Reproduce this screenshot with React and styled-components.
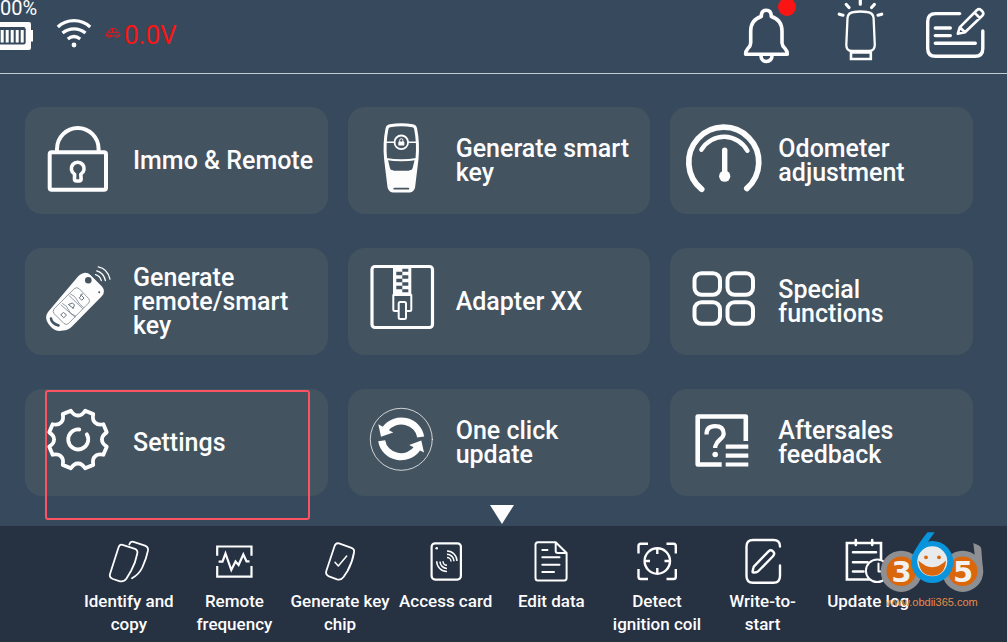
import React from "react";
import styled, { createGlobalStyle, css } from "styled-components";

const color = {
  page: "#374a5d",
  card: "#445360",
  dock: "#263142",
  rule: "#c3cad1",
  white: "#fdfdfe",
  alert: "#fb1414",
  mark: "#fb5264",
};

const GlobalStyle = createGlobalStyle`
  * { box-sizing: border-box; }
  html, body { margin: 0; padding: 0; }
  body {
    background: ${color.page};
    color: ${color.white};
    font-family: Roboto, "Liberation Sans", sans-serif;
  }
`;

const plainButton = css`
  appearance: none;
  border: 0;
  margin: 0;
  padding: 0;
  background: none;
  color: inherit;
  font-family: inherit;
  cursor: pointer;
`;

const Screen = styled.div`
  min-height: 100vh;
  display: flex;
  flex-direction: column;
  overflow: hidden;
`;

const Header = styled.header`
  display: flex;
  align-items: flex-start;
  min-height: 74px;
  padding-right: 20px;
  border-bottom: 1px solid ${color.rule};
`;

const Battery = styled.div`
  display: flex;
  flex-direction: column;
  width: 56px;
  font-size: 20px;
  line-height: 16px;
`;

const Voltage = styled.div`
  display: flex;
  gap: 3px;
  margin-left: 13px;
  color: ${color.alert};
  font-size: 26px;
  line-height: 70px;
`;

const Actions = styled.div`
  display: flex;
  gap: 40px;
  margin-left: auto;
`;

const ActionButton = styled.button`
  ${plainButton}
  position: relative;
  display: flex;
`;

const Badge = styled.span`
  position: absolute;
  top: -2px;
  right: 1px;
  width: 18px;
  height: 18px;
  border-radius: 50%;
  background: ${color.alert};
`;

const Icon = styled.svg`
  display: block;
  flex: none;
  fill: none;
  stroke: currentColor;
  stroke-width: ${(p) => p.$weight || 2}px;
  stroke-linecap: round;
  stroke-linejoin: round;
`;

const Main = styled.main`
  display: flex;
  flex-direction: column;
  padding-top: 33px;
`;

const Grid = styled.div`
  display: grid;
  grid-template-columns: repeat(3, 1fr);
  gap: 34px 20px;
  padding: 0 34px 0 25px;
`;

const Card = styled.button`
  ${plainButton}
  position: relative;
  display: flex;
  align-items: center;
  min-height: 107px;
  padding-right: 12px;
  border-radius: 17px;
  background: ${color.card};
  text-align: left;
  font-size: 25px;
  font-weight: 500;
  line-height: 24px;
`;

const CardLabel = styled.span`
  padding-top: 1px;
`;

const Highlight = styled.span`
  position: absolute;
  inset: 1px 18px -24px 20px;
  border: 2px solid ${color.mark};
  border-radius: 3px;
  pointer-events: none;
`;

const MoreButton = styled.button`
  ${plainButton}
  align-self: center;
  padding: 9px 4px 2px 0;
`;

const Dock = styled.nav`
  position: relative;
  flex: 1 0 auto;
  display: grid;
  grid-template-columns: repeat(8, 1fr);
  align-items: start;
  min-height: 116px;
  padding: 12px 86px 0 76px;
  background: ${color.dock};
`;

const DockButton = styled.button`
  ${plainButton}
  display: flex;
  flex-direction: column;
  align-items: center;
  gap: 4px;
  font-size: 17px;
  font-weight: 500;
  line-height: 23px;
  white-space: pre;
`;

const Watermark = styled.a`
  position: absolute;
  top: 5px;
  right: 17px;
  display: flex;
  flex-direction: column;
  color: #e88b46;
  font: 11px/14px "Liberation Sans", sans-serif;
  text-decoration: none;
`;

const Site = styled.span`
  padding: 2px 0 0 6px;
`;

/* Scalloped outline with eight teeth, centred on (cx, cy). */
function gearPath(cx, cy) {
  const at = (deg, r) => {
    const a = ((deg - 90) * Math.PI) / 180;
    return `${(cx + r * Math.cos(a)).toFixed(2)} ${(cy + r * Math.sin(a)).toFixed(2)}`;
  };
  let d = "";
  for (let k = 0; k < 8; k += 1) {
    const mid = k * 45;
    d += `${k === 0 ? "M" : "L"}${at(mid - 14, 29.6)} Q${at(mid - 9, 24)} ${at(mid, 24)} Q${at(mid + 9, 24)} ${at(mid + 14, 29.6)} `;
  }
  return `${d}Z`;
}

const solid = { fill: "currentColor", stroke: "none" };

const cards = [
  {
    label: "Immo & Remote",
    weight: 4,
    art: (
      <>
        <rect x="24.7" y="45.3" width="56.3" height="37.4" rx="2" />
        <path d="M32 45v-3a20.8 21 0 0 1 41.6 0v3" />
        <path strokeWidth="3.6" d="M49.6 67.2a6.4 6.4 0 1 1 6.2 0l.3 4.8q0 2-2 2h-2.6q-2 0-2-2z" />
      </>
    ),
  },
  {
    label: "Generate smart key",
    weight: 2,
    art: (
      <>
        <path strokeWidth="3" d="M42 18.7Q53.3 17 64.6 18.7q2.5.4 3 3Q70.5 36 69 52L65.6 80q-.6 3.500-4 4H45q-3.400-.5-4-4L37.600 52Q36 36 39 21.700q.5-2.600 3-3z" />
        <path {...solid} d="M38.500 58 41 62q1 1.800 3 1.800h18.600q2 0 3-1.800l2.500-4-2.500 22q-.6 3-4 4H45q-3.400-.5-4-4z" />
        <path d="M38 52Q53.300 54.500 68.600 52" />
        <path strokeWidth="2.500" d="M39 54l1.500 6.500q.8 4 4 4M67.600 54l-1.500 6.500q-.8 4-4 4" />
        <path strokeWidth="1.500" d="M38 35.300h8.500M60.200 35.300h8.500" />
        <circle cx="53.300" cy="35.300" r="6.800" strokeWidth="1.800" />
        <rect {...solid} x="50.300" y="34.500" width="6" height="4" rx=".5" />
        <path strokeWidth="1" d="M51.700 34.500v-1.200a1.600 1.600 0 0 1 3.200 0v1.200" />
        <path stroke={color.card} strokeWidth="1.800" d="M46.300 81.700h14" />
      </>
    ),
  },
  {
    label: "Odometer adjustment",
    weight: 5,
    art: (
      <>
        <path strokeWidth="5.700" d="M31.700 82.300A35 35 0 1 1 76.800 81.500" />
        <path strokeWidth="4.500" d="M31.400 42.700A26.500 26.500 0 0 1 77.400 43.700" />
        <path strokeWidth="5.400" d="M54.700 43.200V69" />
        <circle {...solid} cx="54.700" cy="69.200" r="5.600" />
      </>
    ),
  },
  {
    label: "Generate remote/smart key",
    weight: 1.3,
    art: (
      <>
        <path {...solid} d="M23 64 53 28.500Q60 22 65.500 27L77 38.500Q81 43.500 77 48L47 78.500Q43 82.500 38 82.500L34.500 83Q30 83 26 79L23.500 76Q19 69.500 23 64z" />
        <g stroke={color.card}>
          <circle cx="63.300" cy="32.300" r="3.300" fill={color.card} stroke="none" />
          <circle cx="74.200" cy="44.300" r="1" fill={color.card} stroke="none" />
          <path strokeWidth="2.600" d="M26 70.500q0 2 2 4t5.500 3" />
          <g opacity=".8">
            <path strokeWidth=".7" d="M49.500 40.500q2.500-2 4.800.3l9.300 9.700q2 2.200 0 4.500L43.500 75.500q-2.300 2-4.500 0L29 65.500q-2-2 0-4.500z" />
            <path strokeWidth=".7" d="M44 47.500 57.500 60.500M45.500 46q5 2 6.500 6t6.500 7.500M36 57l14 12M37.500 55.500q5 2.500 6 6.500t7 6" />
            <path strokeWidth="1" d="M54.500 49.500l2-2 2.500 2.500-2 2zM55.500 47.500q0-2 2-1.500M43.500 56.500l4-1.500 2 2-1.500 3.500M44 57l4 3M36 66.500l2.500-2 3 2.500-2.500 2.500z" />
          </g>
        </g>
        <path d="M73.300 18.900q9 1.600 11.700 12.200M71.700 22.900q6.700 1.600 8.700 9.600M70.500 26.700q4.500 1.300 5.800 6" />
      </>
    ),
  },
  {
    label: "Adapter XX",
    weight: 2,
    art: (
      <>
        <rect x="24" y="18.500" width="60.500" height="61" rx="3" strokeWidth="3.200" />
        <path {...solid} d="M45 19h18.300v28.500H45z" />
        <path
          fill={color.card}
          stroke="none"
          d="M48.300 23.700h6v3.600h-6zM48.300 30.700h6v3.600h-6zM48.300 37.700h6v3.600h-6zM54.300 20.700h6v3h-6zM54.300 27.300h6v3.400h-6zM54.300 34.300h6v3.400h-6zM54.300 41.300h6v3h-6z"
        />
        <path fill={color.card} d="M45.300 47h18v14.500q0 1.500-1.500 1.500h-15q-1.500 0-1.500-1.500z" />
        <rect x="50.700" y="54" width="7.300" height="17" rx="1.500" fill={color.card} />
      </>
    ),
  },
  {
    label: "Special functions",
    weight: 4,
    art: (
      <>
        <rect x="24.500" y="25.200" width="25.500" height="21.600" rx="7" />
        <rect x="57.500" y="25.200" width="25.500" height="21.600" rx="7" />
        <rect x="24.500" y="54.200" width="25.500" height="21.600" rx="7" />
        <rect x="57.500" y="54.200" width="25.500" height="21.600" rx="7" />
      </>
    ),
  },
  {
    label: "Settings",
    weight: 3.8,
    marked: true,
    art: (
      <>
        <path d={gearPath(53, 50.5)} />
        <path d="M54.300 40.500a10 10 0 1 0 7.500 4.800" />
      </>
    ),
  },
  {
    label: "One click update",
    weight: 7,
    art: (
      <>
        <circle cx="53.300" cy="50.300" r="31" strokeWidth="1" opacity=".75" />
        <g strokeLinecap="butt">
          <path d="M72.700 48A19.500 18.500 0 0 0 37.300 40" />
          <path d="M33.700 51.700A19.500 18.500 0 0 0 69.500 59" />
        </g>
        <path {...solid} d="M30.300 35.300 45.200 43.600 33 47.800zM76 63.500 61.200 56 73.300 51.500z" />
      </>
    ),
  },
  {
    label: "Aftersales feedback",
    weight: 4.2,
    art: (
      <g strokeLinecap="butt">
        <path strokeWidth="4.600" d="M51.700 75.500H27.700V27.500H75.800V52" />
        <path d="M36.500 45.500Q36.500 37.200 45 37.200T53.700 44.500Q53.700 47.500 50 50.500T45.200 57.500V59" />
        <circle {...solid} cx="45.200" cy="65.500" r="2.800" />
        <path d="M55.700 57.700h22.600M55.700 66.700h22.600M55.700 75.500h22.600" />
      </g>
    ),
  },
];

const tools = [
  {
    label: "Identify and\ncopy",
    weight: 1.8,
    art: (
      <>
        <path d="M18.500 6.800 31 10.800Q34 12 33.300 15.500 31.500 25 27 33L22.500 40.500Q20 44 16 43.300L9 41Q5 39.500 6 36L14.500 9.500Q15.700 6 18.500 6.800z" />
        <path d="M25.300 6.500Q26.500 3 29.500 3.800L41 7.600Q44.500 9 44 12.500 42.500 20 38.500 29 35.500 36 28 40.300" />
      </>
    ),
  },
  {
    label: "Remote\nfrequency",
    weight: 2.2,
    art: (
      <g strokeLinecap="butt" strokeLinejoin="miter">
        <path d="M8.200 17.700V8.500H42.500V17.700M8.200 28V38.600H42.500V28" />
        <path d="M9.600 23.700H13.500L16.500 15.500 22.300 32 26.500 23.500 29.600 27 34.300 16.500 37.500 23.300H40.500" />
      </g>
    ),
  },
  {
    label: "Generate key\nchip",
    weight: 1.8,
    art: (
      <>
        <path d="M24 5.400 36.500 9.800Q39.800 11 39 14.500 37.500 24 32.500 33L28.500 39Q26 42.500 22 41.300L14 38.300Q10.200 36.700 11.300 33L19.500 8.300Q20.800 4.500 24 5.400z" />
        <path strokeWidth="1.500" d="M20 24.200 23.300 28 31.700 18" />
      </>
    ),
  },
  {
    label: "Access card",
    weight: 2.2,
    art: (
      <>
        <rect x="10.600" y="5.300" width="29.300" height="36.300" rx="3.500" />
        <circle {...solid} cx="15.700" cy="10.200" r="1.300" />
        <path strokeWidth="1.500" strokeLinecap="butt" d="M26 19.500a4 4 0 0 1 4 4M26 16.300a7 7 0 0 1 7 7M26 13a10 10 0 0 1 10 10M26 27.300a4 4 0 0 1-4-4M26 30.400a7 7 0 0 1-7-7M26 33.500a10.300 10.300 0 0 1-10.300-10.300" />
      </>
    ),
  },
  {
    label: "Edit data",
    weight: 2,
    art: (
      <path d="M29.700 4.200H12Q9.500 4.200 9.500 6.700V40Q9.500 42.600 12 42.600H38Q40.600 42.600 40.600 40V15zV13Q29.700 15 31.700 15H40.600M16.300 12H21.500M16.300 19.300H33.500M16.300 26.700H33.500M16.300 34H28" />
    ),
  },
  {
    label: "Detect\nignition coil",
    weight: 2.4,
    art: (
      <g strokeLinecap="butt">
        <path d="M6.500 15.500V8Q6.500 5.700 8.800 5.700H16M34.500 5.700H41.500Q43.800 5.700 43.800 8V15.500M43.800 31V38.700Q43.800 41 41.500 41H34.500M16 41H8.800Q6.500 41 6.500 38.700V31" />
        <circle cx="25.300" cy="23" r="12.700" />
        <path d="M25.300 10.500v5.500M25.300 30v5.500M12.500 23h5.500M32.500 23h5.500" />
      </g>
    ),
  },
  {
    label: "Write-to-\nstart",
    weight: 2.4,
    art: (
      <>
        <path d="M42 8.500Q42 2 35.500 2H15Q8.500 2 8.500 8.500V38Q8.500 44.700 15 44.700H35.500Q42 44.700 42 38V27.500" />
        <path d="M14.600 33.500 15.300 30Q15.500 28.800 16.500 27.800L30.500 13.300Q32.700 11.300 35 13.300T35.200 18L20.500 33Q19.600 34 18.300 34.200L15.500 34.600Q14.400 34.600 14.600 33.500z" />
      </>
    ),
  },
  {
    label: "Update log",
    weight: 2.6,
    art: (
      <>
        <g strokeLinejoin="miter">
          <path d="M3.900 5H38V41.500H3.900z" />
          <path d="M12.800 2V7M29.200 2V7M10 14.300H33M10 24.300H24.500M10 33.500H20.500" />
        </g>
        <circle cx="34.200" cy="32.700" r="11.300" fill={color.dock} strokeWidth="2" />
        <path strokeWidth="2" d="M35.500 25.500V33.500H40" />
      </>
    ),
  },
];

function Logo() {
  return (
    <svg width="110" height="62" viewBox="0 0 110 62" aria-hidden="true">
      <g fill="#8d8f92">
        <path d="M93.300 12 98.500 14.200Q101 15.200 101.300 18L103 40 97 44z" />
        <circle cx="21.300" cy="40.300" r="20.600" />
        <circle cx="82.700" cy="40.300" r="20.600" />
      </g>
      <g fill="#da670b">
        <circle cx="21.300" cy="40.300" r="14.800" />
        <circle cx="82.700" cy="40.300" r="14.800" />
      </g>
      <path fill="#0994dc" d="M47.500 1.300H54.700L47 12 33 24Q37 14 47.500 1.300z" />
      <circle cx="52.300" cy="31" r="21" fill="#0994dc" />
      <circle cx="52.300" cy="30.300" r="15" fill="#e9eaec" />
      <path fill="#da670b" d="M38.500 29.500Q52.300 43 66 29.500 65 44.700 52.300 44.700T38.500 29.500z" />
      <circle cx="46" cy="26.300" r="1.900" fill="#da670b" />
      <circle cx="59" cy="26.300" r="1.900" fill="#da670b" />
      <g fill="#f1f1f1" fontFamily="DejaVu Sans, sans-serif" fontWeight="700" fontSize="29" textAnchor="middle">
        <text x="21.500" y="51">3</text>
        <text x="83" y="51">5</text>
      </g>
    </svg>
  );
}

export default function App() {
  return (
    <Screen>
      <GlobalStyle />
      <Header>
        <Battery>
          <span>00%</span>
          <Icon width="38" height="36" viewBox="0 0 38 36" aria-hidden="true">
            <path fill="currentColor" stroke="none" d="M0 6H29Q31 6 31 8V14H33V25.500H31V32Q31 34 29 34H0z" />
            <path fill={color.page} stroke="none" d="M0 11H23.500Q25.700 11 25.700 13.200V26.200Q25.700 28.400 23.500 28.400H0z" />
            <path fill="currentColor" stroke="none" d="M.7 14h3v12.500h-3zM5.700 14h3v12.500h-3zM10.700 14h3v12.500h-3zM15.700 14h3v12.500h-3zM20.700 14h3v12.500h-3z" />
          </Icon>
        </Battery>
        <Icon $weight={3.2} width="36" height="73" viewBox="0 0 36 73" role="img" aria-label="Wi-Fi">
          <path strokeLinecap="butt" d="M1.800 27A24 24 0 0 1 34.200 27M6.500 33A18 18 0 0 1 29.500 33M11.800 39Q18 34 24.200 39" />
          <circle {...solid} cx="18" cy="45" r="2.400" />
        </Icon>
        <Voltage>
          <Icon $weight={0.9} width="16" height="69" viewBox="0 0 16 69" aria-hidden="true">
            <path d="M2.500 36H1.200Q.5 33 3 32.200L5 29.500Q5.500 28.500 7 28.500H9.500Q11 28.500 12 30L13 32.200Q15.500 33 14.800 36H13.500M6 36H10M3.500 32.300H12.500M7.500 29V32" />
            <circle cx="4.200" cy="36" r="1.500" />
            <circle cx="11.800" cy="36" r="1.500" />
          </Icon>
          0.0V
        </Voltage>
        <Actions>
          <ActionButton aria-label="Notifications">
            <Icon $weight={3.6} width="54" height="73" viewBox="0 0 54 73">
              <path d="M18.300 16.500Q18.300 10.300 23.300 10.300T28.300 16.500Q39 20 39 31V43Q39.200 46 42 48.500 44.300 51 44.300 54.300H2.600Q2.600 51 4.900 48.500 7.600 46 7.700 43V31Q7.700 20 18.300 16.500z" />
              <path d="M18 56a5.500 5.500 0 0 0 11 0" />
            </Icon>
            <Badge />
          </ActionButton>
          <ActionButton aria-label="Light">
            <Icon $weight={2.3} width="48" height="73" viewBox="0 0 48 73">
              <path d="M10.500 18Q11 12.500 17 12 23.500 11 30 12 36 12.500 36.600 18L37.800 45Q37.600 51 32 51H15Q9.300 51 9.300 45z" />
              <path strokeWidth="2.600" strokeLinejoin="miter" d="M14 52.500H33.800V59H14z" />
              <path strokeWidth="3.200" d="M23.300 0V4.200M9.300 4.500 12 7.500M37.300 4.500 34.600 7.500M2.300 14.200 6 15.200M44.700 14.200 41 15.200" />
            </Icon>
          </ActionButton>
          <ActionButton aria-label="Feedback note">
            <Icon $weight={3.4} width="62" height="73" viewBox="0 0 62 73">
              <path d="M34.700 13.600H10.500Q2.700 13.600 2.700 21.500V48.500Q2.700 56.300 10.500 56.300H50Q57.800 56.300 57.800 48.500V31M10.300 28H25.300M10.300 35.600H25.300M10.300 43.300H50.300" />
              <path strokeWidth="2.600" d="M32.800 33.800 34.700 27.300 52 10Q54 8.300 56 10L57.500 11.500Q59.200 13.500 57.500 15.500L40 32.300zM49.500 12.700 54.800 18M34.700 27.300 40 32.300" />
            </Icon>
          </ActionButton>
        </Actions>
      </Header>

      <Main>
        <Grid>
          {cards.map((card) => (
            <Card key={card.label}>
              <Icon $weight={card.weight} width="108" height="107" viewBox="0 0 108 107" aria-hidden="true">
                {card.art}
              </Icon>
              <CardLabel>{card.label}</CardLabel>
              {card.marked && <Highlight />}
            </Card>
          ))}
        </Grid>
        <MoreButton aria-label="More functions">
          <Icon width="24" height="19" viewBox="0 0 24 19">
            <path {...solid} d="M0 0H24L12 19z" />
          </Icon>
        </MoreButton>
      </Main>

      <Dock>
        {tools.map((tool) => (
          <DockButton key={tool.label}>
            <Icon $weight={tool.weight} width="50" height="48" viewBox="0 0 50 48" aria-hidden="true">
              {tool.art}
            </Icon>
            <span>{tool.label}</span>
          </DockButton>
        ))}
        <Watermark href="#obdii365">
          <Logo />
          <Site>www.obdii365.com</Site>
        </Watermark>
      </Dock>
    </Screen>
  );
}
